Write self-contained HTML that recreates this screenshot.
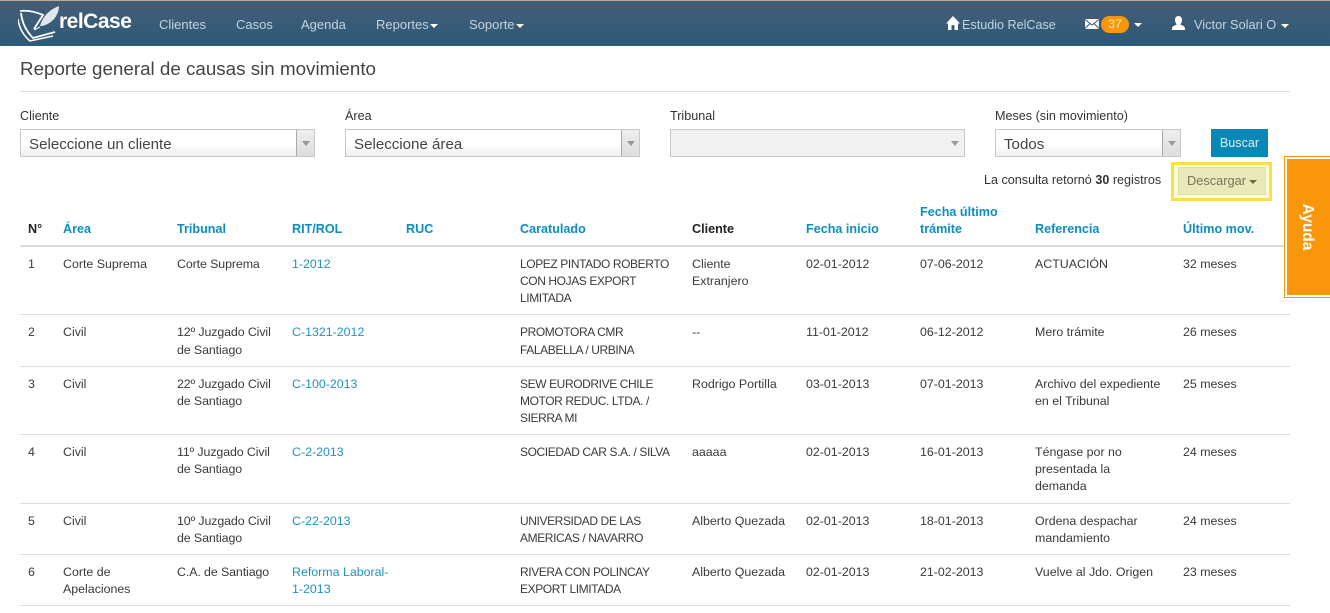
<!DOCTYPE html>
<html lang="es"><head><meta charset="utf-8"><title>Reporte general de causas sin movimiento</title>
<style>
*{box-sizing:border-box}
html,body{margin:0;padding:0;width:1330px;height:613px;overflow:hidden;background:#fff}
body{font-family:"Liberation Sans",sans-serif;font-size:12.4px;color:#333;position:relative}
.a{position:absolute;white-space:nowrap}
.nav{position:absolute;left:0;top:0;width:1330px;height:46px;background:linear-gradient(#465d76,#2c5a78);border-top:1px solid #b8aea0}
.n{position:absolute;top:16px;font-size:13px;color:#c3d3df;white-space:nowrap;line-height:16px}
.car{display:inline-block;width:0;height:0;border-left:4px solid transparent;border-right:4px solid transparent;border-top:4px solid #fff;vertical-align:middle;margin-left:1px}
h1{position:absolute;left:20px;top:58px;margin:0;font-weight:normal;font-size:18.8px;line-height:22px;color:#444;white-space:nowrap}
.hr{position:absolute;left:20px;top:91px;width:1270px;height:1px;background:#ddd}
label{position:absolute;top:108px;font-size:12.6px;line-height:16px;color:#333;white-space:nowrap}
.sel{position:absolute;top:129px;width:295px;height:28px;border:1px solid #c8c8c8;background:linear-gradient(#fff 55%,#eee);font-size:15.1px;line-height:30px;padding-left:8px;color:#444}
.sel i{position:absolute;right:0;top:0;width:18px;height:26px;border-left:1px solid #aaa;background:linear-gradient(#eee,#ddd)}
.sel i:after{content:"";position:absolute;left:5px;top:11px;border-left:4px solid transparent;border-right:4px solid transparent;border-top:5px solid #999}
.dis{background:#f1f1f1}
.dis i{background:none;border-left:0}
.btn{position:absolute;left:1211px;top:129px;width:57px;height:28px;background:#0987b5;color:#dceef5;text-align:center;line-height:28px;font-size:12.6px}
.yl{position:absolute;left:1171px;top:162px;width:101px;height:39px;border:3px solid #fbde4a;background:#fdfcd2}
.dl{position:absolute;left:1178px;top:167px;width:88px;height:28px;background:#e9e8b9;border:1px solid #dfdea9;color:#77755a;line-height:26px;padding-left:8px;font-size:12.8px;white-space:nowrap}
.dl .car{border-top-color:#6e6c45;margin-left:3px}
.help{position:absolute;z-index:5;left:1284px;top:156px;width:46px;height:142px;border:1px solid #f9960a;border-right:0;padding:2px 0 2px 2px;background:#fff}
.help div{width:100%;height:100%;background:#f9960a;position:relative}
.help span{position:absolute;left:calc(50% - 2px);top:50%;transform:translate(-50%,-50%) rotate(90deg);color:#fff;font-weight:bold;font-size:15.5px;white-space:nowrap}
table{position:absolute;left:20px;top:194.7px;width:1270px;border-collapse:collapse;table-layout:fixed;line-height:17.14px;font-size:12.4px}
th{padding:9px 8px 7px;text-align:left;vertical-align:bottom;font-weight:bold;font-size:12.6px;color:#0a8fc0;border-bottom:2px solid #ddd}
th.k{color:#222}
td{padding:9px 8px 7px;vertical-align:top;border-bottom:1px solid #ddd;color:#3a3a3a;white-space:nowrap}
td.c{font-size:12px;letter-spacing:-.4px}
td.t{letter-spacing:-.1px}
td a{color:#1f93bf;text-decoration:none}
</style></head><body>
<div class="nav">
<svg class="a" style="left:18px;top:4px" width="62" height="38" viewBox="0 0 62 38" fill="none" stroke="#fff">
<path d="M2 6 C10 5 18 7 25 10 L16 24" stroke-width="1.8"/>
<path d="M3 8 C4 17 8 26 15 33 L37 27" stroke-width="1.8"/>
<path d="M0 14 C1 22 5 30 12 36 L35 31" stroke-width="1.5"/>
<path d="M22 21 C25 10 33 4 41 1 C41 10 34 19 24 21 Z" fill="#dfe7ec" stroke="none"/>
<path d="M22 22 L16 25" stroke-width="1.1"/>
</svg>
<div class="a" style="left:59px;top:7px;font-size:21px;font-weight:bold;color:#fff;line-height:28px;letter-spacing:-.5px">relCase</div>
<div class="n" style="left:159px">Clientes</div>
<div class="n" style="left:236px">Casos</div>
<div class="n" style="left:301px">Agenda</div>
<div class="n" style="left:376px">Reportes<span class="car"></span></div>
<div class="n" style="left:469px">Soporte<span class="car"></span></div>
<svg class="a" style="left:946px;top:15px" width="14" height="14" viewBox="0 0 14 13" preserveAspectRatio="none" fill="#fff"><path d="M7 0 L14 7 L12 7 L12 13 L8.5 13 L8.5 8.5 L5.5 8.5 L5.5 13 L2 13 L2 7 L0 7 Z"/></svg>
<div class="n" style="left:962px;font-size:12.6px">Estudio RelCase</div>
<svg class="a" style="left:1085px;top:18px" width="14" height="10" viewBox="0 0 14 10"><rect width="14" height="10" fill="#fff"/><path d="M0 .5 L7 6 L14 .5 M0 9.5 L5 4.5 M14 9.5 L9 4.5" stroke="#3a5b76" stroke-width="1" fill="none"/></svg>
<div class="a" style="left:1101px;top:15px;width:28px;height:17px;border-radius:9px;background:#f9960a;color:#fde9c8;text-align:center;line-height:17px;font-size:12.4px">37</div>
<span class="car a" style="left:1134px;top:22px;margin:0"></span>
<svg class="a" style="left:1172px;top:15px" width="13" height="14" viewBox="0 0 13 14" fill="#fff"><path d="M6.5 0 C9 0 10 2 10 4 C10 6 9 7.5 8.3 8.5 C10 9.5 13 10 13 12.5 L13 14 L0 14 L0 12.5 C0 10 3 9.5 4.7 8.5 C4 7.5 3 6 3 4 C3 2 4 0 6.5 0 Z"/></svg>
<div class="n" style="left:1194px;font-size:12.8px">Victor Solari O <span class="car"></span></div>
</div>

<h1>Reporte general de causas sin movimiento</h1>
<div class="hr"></div>

<label style="left:20px">Cliente</label>
<label style="left:345px">Área</label>
<label style="left:670px">Tribunal</label>
<label style="left:995px">Meses (sin movimiento)</label>
<div class="sel" style="left:20px">Seleccione un cliente<i></i></div>
<div class="sel" style="left:345px">Seleccione área<i></i></div>
<div class="sel dis" style="left:670px"><i></i></div>
<div class="sel" style="left:995px;width:186px">Todos<i></i></div>
<div class="btn">Buscar</div>

<div class="a" style="left:984px;top:172px;line-height:17px;color:#333;font-size:12.6px">La consulta retornó <b>30</b> registros</div>
<div class="yl"></div>
<div class="dl">Descargar<span class="car"></span></div>
<div class="help"><div><span>Ayuda</span></div></div>

<table>
<colgroup><col style="width:35px"><col style="width:114px"><col style="width:115px"><col style="width:114px"><col style="width:114px"><col style="width:172px"><col style="width:114px"><col style="width:114px"><col style="width:115px"><col style="width:148px"><col style="width:115px"></colgroup>
<tr><th class="k">N°</th><th>Área</th><th>Tribunal</th><th>RIT/ROL</th><th>RUC</th><th>Caratulado</th><th class="k">Cliente</th><th>Fecha inicio</th><th>Fecha último<br>trámite</th><th>Referencia</th><th>Último mov.</th></tr>
<tr><td>1</td><td>Corte Suprema</td><td class="t">Corte Suprema</td><td><a>1-2012</a></td><td></td><td class="c">LOPEZ PINTADO ROBERTO<br>CON HOJAS EXPORT<br>LIMITADA</td><td>Cliente<br>Extranjero</td><td>02-01-2012</td><td>07-06-2012</td><td>ACTUACIÓN</td><td>32 meses</td></tr>
<tr><td>2</td><td>Civil</td><td class="t">12º Juzgado Civil<br>de Santiago</td><td><a>C-1321-2012</a></td><td></td><td class="c">PROMOTORA CMR<br>FALABELLA / URBINA</td><td>--</td><td>11-01-2012</td><td>06-12-2012</td><td>Mero trámite</td><td>26 meses</td></tr>
<tr><td>3</td><td>Civil</td><td class="t">22º Juzgado Civil<br>de Santiago</td><td><a>C-100-2013</a></td><td></td><td class="c">SEW EURODRIVE CHILE<br>MOTOR REDUC. LTDA. /<br>SIERRA MI</td><td>Rodrigo Portilla</td><td>03-01-2013</td><td>07-01-2013</td><td>Archivo del expediente<br>en el Tribunal</td><td>25 meses</td></tr>
<tr><td>4</td><td>Civil</td><td class="t">11º Juzgado Civil<br>de Santiago</td><td><a>C-2-2013</a></td><td></td><td class="c">SOCIEDAD CAR S.A. / SILVA</td><td>aaaaa</td><td>02-01-2013</td><td>16-01-2013</td><td>Téngase por no<br>presentada la<br>demanda</td><td>24 meses</td></tr>
<tr><td>5</td><td>Civil</td><td class="t">10º Juzgado Civil<br>de Santiago</td><td><a>C-22-2013</a></td><td></td><td class="c">UNIVERSIDAD DE LAS<br>AMERICAS / NAVARRO</td><td>Alberto Quezada</td><td>02-01-2013</td><td>18-01-2013</td><td>Ordena despachar<br>mandamiento</td><td>24 meses</td></tr>
<tr><td>6</td><td>Corte de<br>Apelaciones</td><td class="t">C.A. de Santiago</td><td><a>Reforma Laboral-<br>1-2013</a></td><td></td><td class="c">RIVERA CON POLINCAY<br>EXPORT LIMITADA</td><td>Alberto Quezada</td><td>02-01-2013</td><td>21-02-2013</td><td>Vuelve al Jdo. Origen</td><td>23 meses</td></tr>
</table>
</body></html>
